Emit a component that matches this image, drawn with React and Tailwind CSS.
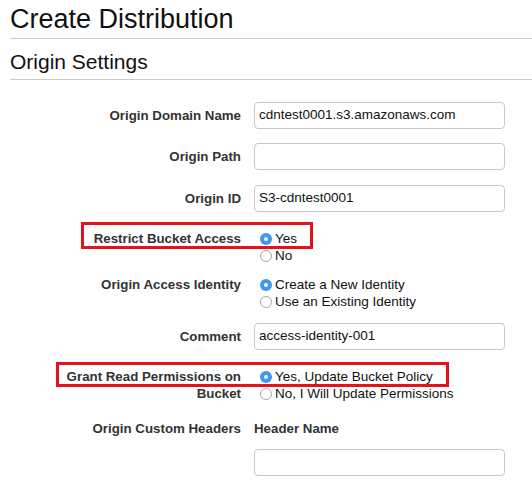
import React from "react";

const Radio = ({ checked }) =>
    checked ? (
        <span className="w-[12px] h-[12px] rounded-full bg-[#3d97f5] flex items-center justify-center shrink-0">
            <span className="w-[4px] h-[4px] rounded-full bg-white" />
        </span>
    ) : (
        <span className="w-[12px] h-[12px] rounded-full bg-white border border-[#a8a8a8] shrink-0" />
    );

const RadioGroup = ({ options }) => (
    <div className="flex flex-col pl-[6px]">
        {options.map((o) => (
            <label key={o.label} className="flex items-center gap-[3px] h-[17px] leading-[17px] text-[13.5px] text-[#111]">
                <Radio checked={o.checked} />
                <span>{o.label}</span>
            </label>
        ))}
    </div>
);

const Label = ({ children }) => (
    <div className="w-[241px] shrink-0 text-right font-bold text-[13.3px] leading-[17px] text-[#333]">
        {children}
    </div>
);

const TextInput = ({ value }) => (
    <div className="w-[251px] h-[27px] border border-[#c8c8c8] rounded-[4px] px-[4px] flex items-center text-[13.5px] text-[#111] bg-white">
        {value}
    </div>
);

const InputRow = ({ label, value, className }) => (
    <div className={`flex items-center gap-[13px] ${className}`}>
        <Label>{label}</Label>
        <TextInput value={value} />
    </div>
);

const RadioRow = ({ label, options, className }) => (
    <div className={`flex items-start gap-[13px] ${className}`}>
        <Label>{label}</Label>
        <RadioGroup options={options} />
    </div>
);

export default function App() {
    return (
        <div className="relative w-[532px] h-[492px] bg-white overflow-hidden font-['Liberation_Sans',Arial,sans-serif]">
            <div className="pl-[10px]">
                <h1 className="text-[27px] leading-[32px] pt-[3px] text-[#111] font-normal">Create Distribution</h1>
                <div className="h-[1px] bg-[#cccccc] mt-[3px]" />
                <h2 className="text-[21px] leading-[26px] mt-[10px] text-[#111] font-normal">Origin Settings</h2>
                <div className="h-[1px] bg-[#cccccc] mt-[4px]" />
            </div>

            <div className="flex flex-col">
                <InputRow className="mt-[22px]" label="Origin Domain Name" value="cdntest0001.s3.amazonaws.com" />
                <InputRow className="mt-[14px]" label="Origin Path" value="" />
                <InputRow className="mt-[15px]" label="Origin ID" value="S3-cdntest0001" />
                <RadioRow
                    className="mt-[18px]"
                    label="Restrict Bucket Access"
                    options={[
                        { label: "Yes", checked: true },
                        { label: "No", checked: false }
                    ]}
                />
                <RadioRow
                    className="mt-[12px]"
                    label="Origin Access Identity"
                    options={[
                        { label: "Create a New Identity", checked: true },
                        { label: "Use an Existing Identity", checked: false }
                    ]}
                />
                <InputRow className="mt-[13px]" label="Comment" value="access-identity-001" />
                <RadioRow
                    className="mt-[18px]"
                    label={<>Grant Read Permissions on<br />Bucket</>}
                    options={[
                        { label: "Yes, Update Bucket Policy", checked: true },
                        { label: "No, I Will Update Permissions", checked: false }
                    ]}
                />
                <div className="flex items-start gap-[13px] mt-[18px]">
                    <Label>Origin Custom Headers</Label>
                    <div className="flex flex-col gap-[12px]">
                        <div className="font-bold text-[13.3px] leading-[17px] text-[#333]">Header Name</div>
                        <TextInput value="" />
                    </div>
                </div>
            </div>

            <div className="absolute left-[81px] top-[222px] w-[232px] h-[27px] border-[3px] border-[#e3121b]" />
            <div className="absolute left-[56px] top-[362px] w-[393px] h-[25px] border-[3px] border-[#e3121b]" />
        </div>
    );
}
